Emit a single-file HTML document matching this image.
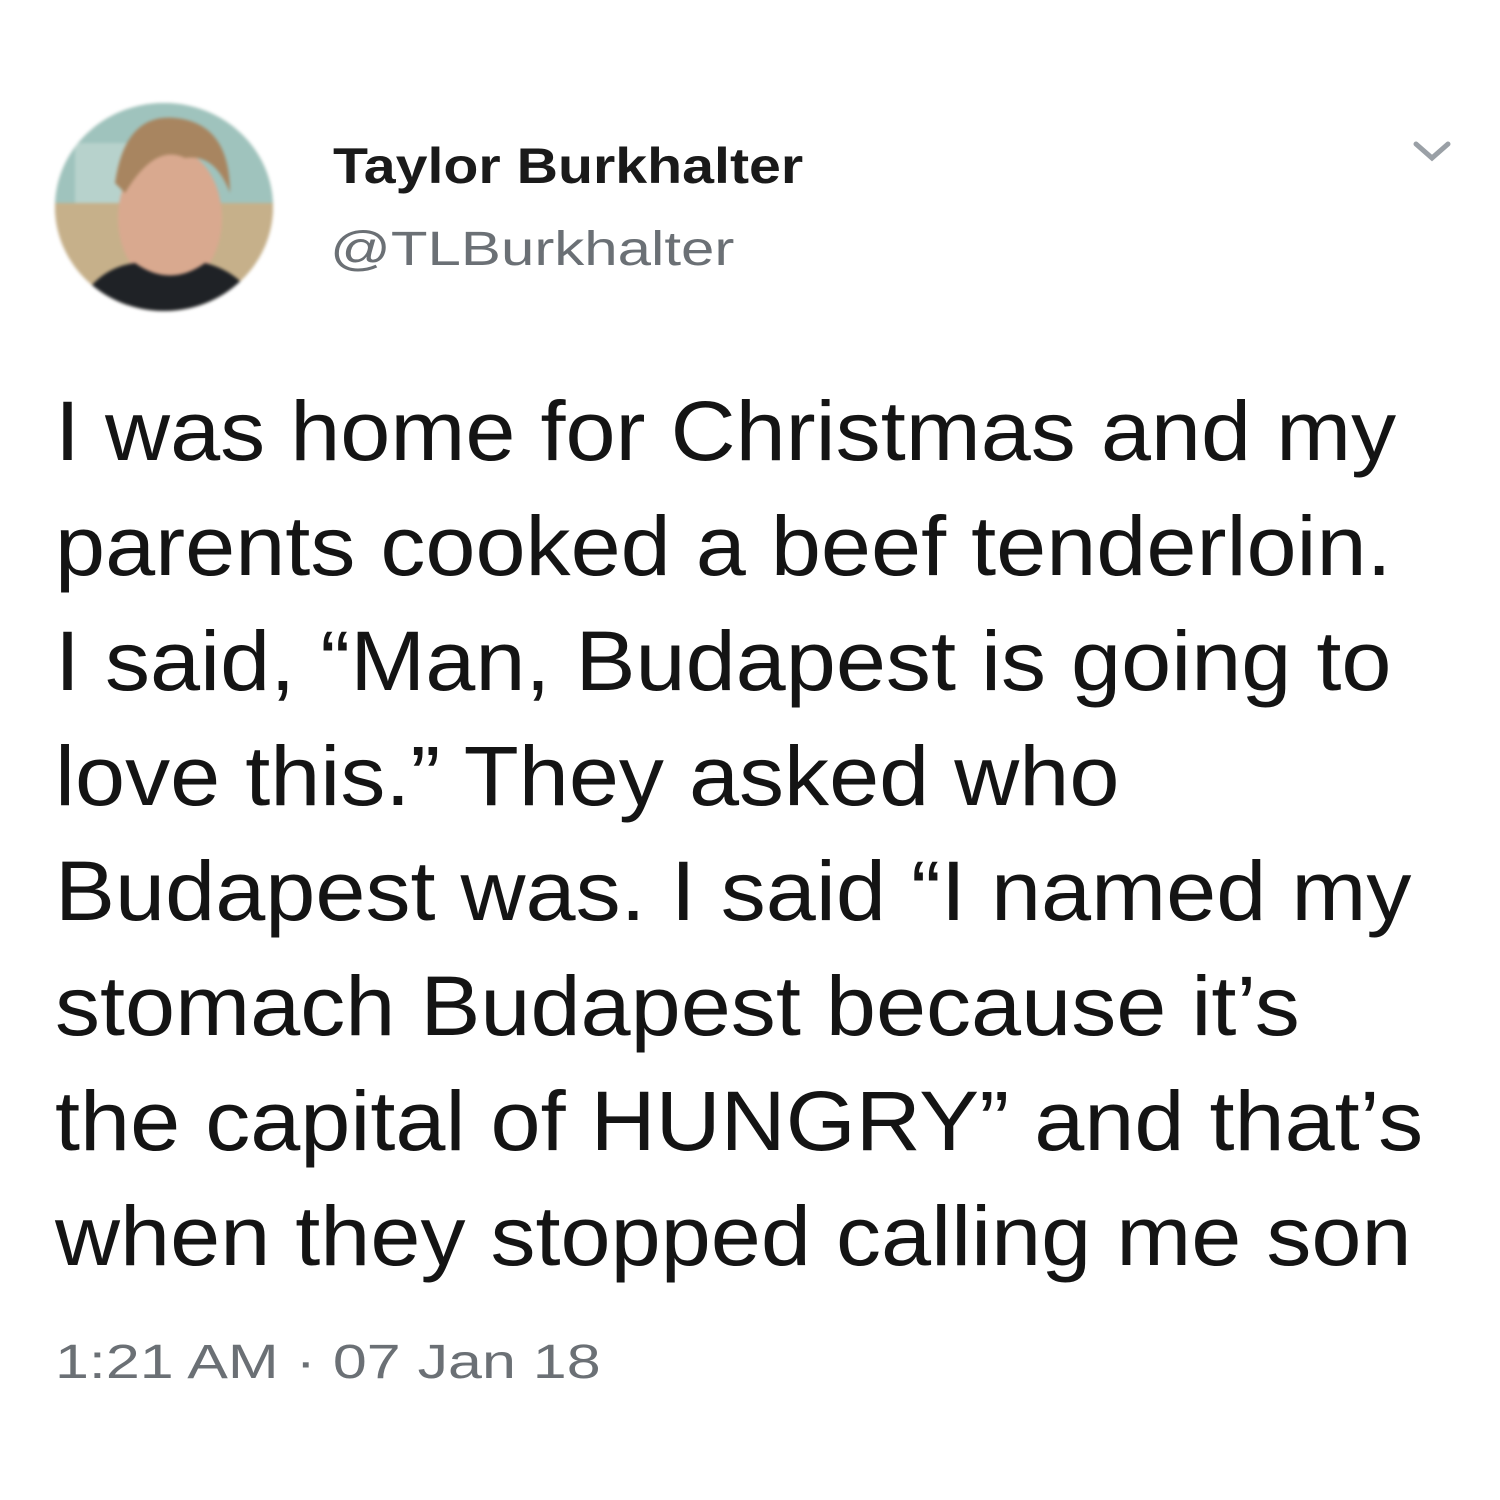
<!DOCTYPE html>
<html><head><style>
html,body{margin:0;padding:0;background:#fff;width:1500px;height:1500px;overflow:hidden;font-family:"Liberation Sans",Arial,sans-serif}
.av{position:absolute;left:55px;top:103px;width:218px;height:208px;border-radius:50%;overflow:hidden;background:#c9b79a;filter:blur(1.5px)}
.t{position:absolute;transform-origin:0 0;white-space:nowrap;line-height:normal}
.name{left:333px;top:137px;font-size:50px;font-weight:bold;color:#1a1a1a;transform:scaleX(1.146)}
.handle{left:330px;top:222px;font-size:48px;color:#6b7075;transform:scaleX(1.25)}
.body{left:55px;top:374px;font-size:84px;line-height:115px;color:#141414;transform:scaleX(1.072)}
.time{left:55px;top:1335px;font-size:48px;color:#6b7075;transform:scaleX(1.27)}
</style></head><body>
<div class="av"><svg width="218" height="208" viewBox="0 0 218 208">
<rect width="218" height="110" fill="#9fc3bd"/>
<rect y="100" width="218" height="108" fill="#c6b08a"/>
<rect x="20" y="40" width="60" height="60" fill="#b7d2cc"/>
<ellipse cx="115" cy="115" rx="52" ry="70" fill="#d9a98f"/>
<path d="M60 80 Q70 10 120 15 Q175 20 175 90 Q160 50 130 55 Q100 40 70 90Z" fill="#a88560"/>
<path d="M20 208 Q40 165 80 160 Q115 185 150 160 Q190 170 205 208Z" fill="#1f2226"/>
</svg></div>
<div class="t name">Taylor Burkhalter</div>
<div class="t handle">@TLBurkhalter</div>
<svg style="position:absolute;left:1410px;top:138px" width="44" height="26" viewBox="0 0 44 26"><path d="M6 6 L22 20 L38 6" fill="none" stroke="#9aa0a6" stroke-width="5" stroke-linecap="round"/></svg>
<div class="t body">I was home for Christmas and my<br>parents cooked a beef tenderloin.<br>I said, “Man, Budapest is going to<br>love this.” They asked who<br>Budapest was. I said “I named my<br>stomach Budapest because it’s<br>the capital of HUNGRY” and that’s<br>when they stopped calling me son</div>
<div class="t time">1:21 AM · 07 Jan 18</div>
</body></html>
